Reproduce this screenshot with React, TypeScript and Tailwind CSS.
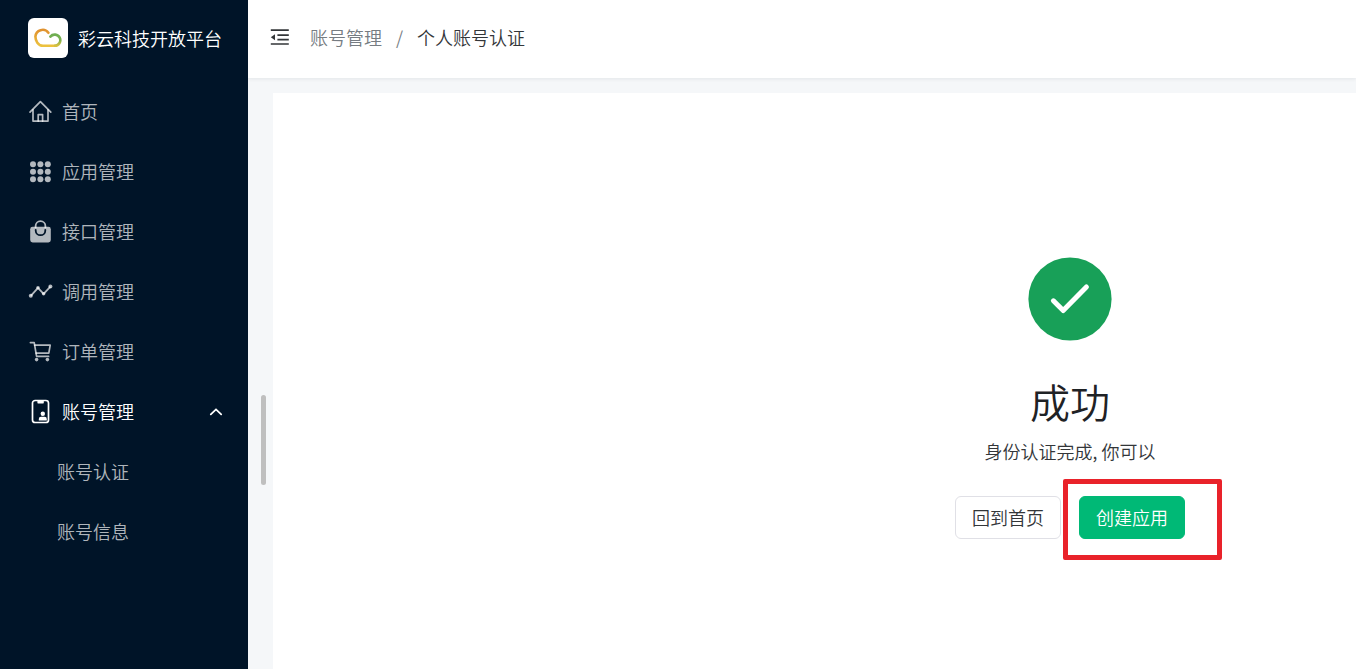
import React from "react";

const HomeIcon = () => (
  <svg viewBox="0 -1 24 24" className="size-6 overflow-visible" fill="none" stroke="currentColor" strokeWidth="1.7" strokeLinejoin="round" strokeLinecap="round">
    <path d="M2 12.2 12.4 1.6 22.8 12.2" />
    <path d="M5 9.8v11.3h15V9.8" />
    <path d="M10.2 21.1v-6.5h4.4v6.5" />
  </svg>
);

const GridIcon = () => (
  <svg viewBox="0 -1 24 24" className="size-6 overflow-visible" fill="currentColor">
    {[4.2, 11.7, 19.2].map((y) =>
      [5, 12.4, 19.8].map((x) => <circle key={`${x}-${y}`} cx={x} cy={y} r="3" />)
    )}
  </svg>
);

const BagIcon = () => (
  <svg viewBox="0 -1 24 24" className="size-6 overflow-visible">
    <path d="M7.6 8V6a4.9 4.9 0 0 1 9.8 0v2" fill="none" stroke="currentColor" strokeWidth="1.8" />
    <rect x="2.2" y="6.8" width="20.6" height="15.6" rx="2.4" fill="currentColor" />
    <path d="M7.7 9.8v.6a4.8 4.8 0 0 0 9.6 0v-.6" fill="none" stroke="#001428" strokeWidth="1.8" strokeLinecap="round" />
  </svg>
);

const TrendIcon = () => (
  <svg viewBox="0 -1 24 24" className="size-6 overflow-visible" fill="currentColor">
    <path d="M2.8 15.8 10 7.8l5.6 6L22.4 6.6" fill="none" stroke="currentColor" strokeWidth="1.8" strokeLinejoin="round" />
    <circle cx="2.8" cy="15.8" r="2" />
    <circle cx="10" cy="7.8" r="1.8" />
    <circle cx="15.6" cy="13.8" r="1.8" />
    <circle cx="22.4" cy="6.6" r="2" />
  </svg>
);

const CartIcon = () => (
  <svg viewBox="0 -1 24 24" className="size-6 overflow-visible" fill="none" stroke="currentColor" strokeWidth="1.7" strokeLinejoin="round" strokeLinecap="round">
    <path d="M2.4 2.6h3.8l2.4 13.8h12" />
    <path d="M6.8 5.2h15.4l-1.4 8H8.2" />
    <circle cx="8.6" cy="19.6" r="1.8" fill="currentColor" stroke="none" />
    <circle cx="19.4" cy="19.6" r="1.8" fill="currentColor" stroke="none" />
  </svg>
);

const AccountIcon = () => (
  <svg viewBox="0 -1 24 24" className="size-6 overflow-visible" fill="currentColor">
    <rect x="4.5" y="0.5" width="16" height="22" rx="2.6" fill="none" stroke="currentColor" strokeWidth="1.7" />
    <path d="M9.4 1h6.4v1.8a.6.6 0 0 1-.6.6H10a.6.6 0 0 1-.6-.6Z" />
    <circle cx="14.8" cy="13.8" r="2.2" />
    <path d="M10.8 20.4V19a2.2 2.2 0 0 1 2.2-2.2h3.6a2.2 2.2 0 0 1 2.2 2.2v1.4Z" />
  </svg>
);

const CollapseIcon = () => (
  <svg viewBox="0 0 20 16" className="h-4 w-5" fill="none" stroke="currentColor" strokeWidth="1.7">
    <path d="M.8 1.2h18M7.4 6.2h11.4M7.4 10.6h11.4M.8 15h18" />
    <path d="M5 5.2v6L.8 8.2Z" fill="currentColor" stroke="none" />
  </svg>
);

const Logo = () => (
  <span className="flex size-10 shrink-0 items-center justify-center rounded-md bg-white">
    <svg viewBox="0 0 28 20" className="h-5 w-7" fill="none" strokeWidth="2.6" strokeLinecap="round">
      <defs>
        <linearGradient id="cloud" x1="0" y1="0" x2="0" y2="1">
          <stop offset="0" stopColor="#e0922f" />
          <stop offset="1" stopColor="#ecc23e" />
        </linearGradient>
        <linearGradient id="leaf" x1="0" y1="1" x2="0" y2="0">
          <stop offset="0" stopColor="#d9c040" />
          <stop offset="0.5" stopColor="#7bb04f" />
          <stop offset="1" stopColor="#6fae52" />
        </linearGradient>
      </defs>
      <path d="M14.4 4.8A7.2 7.2 0 0 0 1.4 8.6c0 4 2.6 9.2 7.6 9.2h12" stroke="url(#cloud)" />
      <path d="M16.4 8.6a5.6 5.6 0 1 1 4.6 9.2" stroke="url(#leaf)" />
    </svg>
  </span>
);

const MENU = [
  { label: "首页", icon: HomeIcon },
  { label: "应用管理", icon: GridIcon },
  { label: "接口管理", icon: BagIcon },
  { label: "调用管理", icon: TrendIcon },
  { label: "订单管理", icon: CartIcon },
];

const ACCOUNT_MENU = ["账号认证", "账号信息"];

const Sidebar: React.FC = () => (
  <aside className="w-62 shrink-0 bg-[#001428] text-white/70">
    <a href="#" className="flex h-19 items-center gap-[10px] pl-7 whitespace-nowrap text-white">
      <Logo />
      <span>彩云科技开放平台</span>
    </a>
    <nav className="pt-[5px]">
      <ul>
        {MENU.map(({ label, icon: Icon }) => (
          <li key={label}>
            <a href="#" className="flex h-15 items-center gap-[10px] pl-7 hover:text-white">
              <Icon />
              {label}
            </a>
          </li>
        ))}
        <li>
          <button type="button" aria-expanded="true" className="flex h-15 w-full items-center gap-[10px] pr-6 pl-7 text-white">
            <AccountIcon />
            账号管理
            <svg viewBox="0 0 16 16" className="ml-auto size-4" fill="none" stroke="currentColor" strokeWidth="1.8" strokeLinecap="round">
              <path d="m2.8 11.4 5.2-5 5.2 5" />
            </svg>
          </button>
          <ul>
            {ACCOUNT_MENU.map((label) => (
              <li key={label}>
                <a href="#" className="flex h-15 items-center pl-[57px] hover:text-white">{label}</a>
              </li>
            ))}
          </ul>
        </li>
      </ul>
    </nav>
  </aside>
);

const Header: React.FC = () => (
  <header className="z-10 flex h-[78px] shrink-0 items-center bg-white pb-1 pl-[22px] shadow-[0_1px_4px_rgba(0,21,41,0.08)]">
    <button type="button" aria-label="menu" className="text-[#333639]">
      <CollapseIcon />
    </button>
    <nav className="pl-5">
      <ol className="flex items-center gap-[14px]">
        <li><a href="#" className="text-[#767c82]">账号管理</a></li>
        <li className="text-[#767c82]">/</li>
        <li className="text-[#333639]">个人账号认证</li>
      </ol>
    </nav>
  </header>
);

const Result: React.FC = () => (
  <section className="flex min-w-[1594px] flex-1 flex-col items-center bg-white pt-[164px]">
    <svg viewBox="0 0 84 84" className="size-21">
      <circle cx="42" cy="42" r="41.6" fill="#18a058" />
      <path d="m25.4 43.8 9.8 9.8 23.2-23.6" fill="none" stroke="#fff" strokeWidth="5" strokeLinecap="round" strokeLinejoin="round" />
    </svg>
    <h1 className="mt-9 text-[40px] leading-12 text-[#1f2225]">成功</h1>
    <p className="mt-3 leading-7 text-[#333639]">身份认证完成, 你可以</p>
    <div className="mt-[31px] flex gap-[18px]">
      <button type="button" className="h-[43px] rounded-md border border-[#e0e0e6] px-4 pb-[2px] text-[#333639]">
        回到首页
      </button>
      <div className="relative">
        <button type="button" className="h-[43px] rounded-md border border-[#00b976] bg-[#00b976] px-4 pb-[2px] text-white">
          创建应用
        </button>
        <span className="pointer-events-none absolute -top-[17px] -right-[37px] -bottom-[21px] -left-[16px] rounded-xs border-5 border-[#e9222a]" />
      </div>
    </div>
  </section>
);

export default function App() {
  return (
    <div className="flex min-h-screen font-['Noto_Sans_CJK_SC',sans-serif] text-lg font-[350]">
      <Sidebar />
      <div className="flex min-w-0 flex-1 flex-col overflow-hidden bg-[#f5f7f9]">
        <Header />
        <main className="relative flex flex-1 pt-[15px] pl-[25px]">
          <span className="absolute top-[317px] left-[13px] h-[90px] w-[5px] rounded-full bg-[#bfbfbf]" />
          <Result />
        </main>
      </div>
    </div>
  );
}
